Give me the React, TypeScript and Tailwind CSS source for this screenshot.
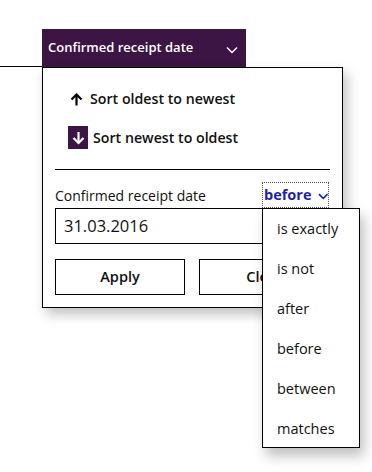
import React from "react";

const font = { fontFamily: '"Segoe UI", "Open Sans", "Noto Sans", sans-serif' };

export default function App() {
  const options = ["is exactly", "is not", "after", "before", "between", "matches"];
  return (
    <div className="w-[372px] h-[472px] bg-white relative overflow-hidden" style={font}>
      <div className="flex items-end pt-[29px]">
        <div className="w-[42px] h-[38px] border-b border-black" />
        <div className="w-[204px] h-[38px] bg-[#3c1544] flex items-center justify-between pl-[6px] pr-[8px] text-white text-[13px] font-semibold">
          <span>Confirmed receipt date</span>
          <svg width="12" height="8" viewBox="0 0 12 8" className="mt-[4px]">
            <path d="M1 1.5 L6 6.5 L11 1.5" fill="none" stroke="white" strokeWidth="1.4" />
          </svg>
        </div>
      </div>
      <div className="ml-[42px] w-[301px] h-[241px] border border-black bg-white relative shadow-[4px_6px_12px_rgba(0,0,0,0.25)] px-[12px]">
        <div className="flex items-center h-[20px] mt-[21px] pl-[15px] gap-[7px] text-[14.2px] font-semibold text-[#111]">
          <svg width="13" height="13" viewBox="0 0 13 13">
            <path d="M6.5 12.5 V2" stroke="black" strokeWidth="2.2" />
            <path d="M1.5 6.5 L6.5 1.5 L11.5 6.5" fill="none" stroke="black" strokeWidth="2.2" />
          </svg>
          <span>Sort oldest to newest</span>
        </div>
        <div className="flex items-center h-[23px] mt-[17px] pl-[13px] gap-[5px] text-[14.2px] font-semibold text-[#111]">
          <div className="w-[20px] h-[23px] bg-[#3c1544] flex items-center justify-center">
            <svg width="13" height="14" viewBox="0 0 13 14">
              <path d="M6.5 1 V12" stroke="white" strokeWidth="2.2" />
              <path d="M1.5 7 L6.5 12 L11.5 7" fill="none" stroke="white" strokeWidth="2.2" />
            </svg>
          </div>
          <span>Sort newest to oldest</span>
        </div>
        <div className="h-px bg-black mt-[20px]" />
        <div className="flex items-center justify-between h-[26px] mt-[12px]">
          <span className="text-[14px] text-[#111]">Confirmed receipt date</span>
          <div className="h-[26px] w-[67px] border border-dotted border-[#555] flex items-center gap-[6px] pl-[1px] text-[14.5px] font-bold text-[#1f1fae] mr-[1px]">
            <span>before</span>
            <svg width="11" height="7" viewBox="0 0 11 7" className="mt-[3px]">
              <path d="M1 1 L5.5 5.5 L10 1" fill="none" stroke="#1f1fae" strokeWidth="1.6" />
            </svg>
          </div>
        </div>
        <div className="h-[36px] border border-black flex items-center pl-[8px] text-[16.5px] text-[#111]">
          31.03.2016
        </div>
        <div className="flex justify-between mt-[15px]">
          <button className="w-[130px] h-[36px] border border-black bg-white text-[14.5px] font-semibold text-[#111]">Apply</button>
          <button className="w-[131px] h-[36px] border border-black bg-white text-[14.5px] font-semibold text-[#111]">Clear</button>
        </div>
      </div>
      <div className="absolute left-[262px] top-[208px] w-[98px] h-[240px] border border-black bg-white shadow-[4px_8px_12px_rgba(0,0,0,0.25)]">
        {options.map((o) => (
          <div key={o} className="h-[40px] flex items-center pl-[14px] text-[14.5px] text-[#111]">
            {o}
          </div>
        ))}
      </div>
    </div>
  );
}
